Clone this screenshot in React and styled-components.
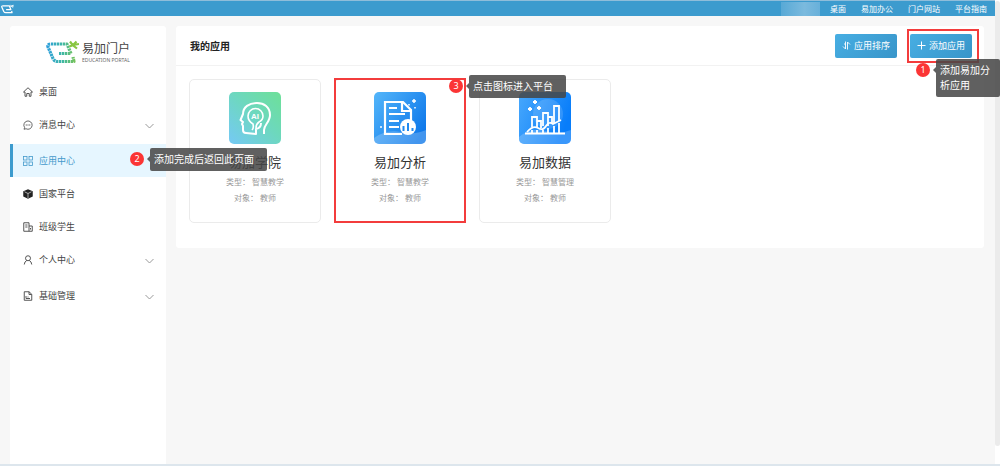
import React from "react"
import styled, { createGlobalStyle, css } from "styled-components"

const GlobalStyle = createGlobalStyle`
  * {
    box-sizing: border-box;
  }

  body {
    margin: 0;
    background: #f7f7f7;
    color: #444;
    font-family: "Noto Sans", "Noto Sans CJK SC", sans-serif;
    font-size: 9px;
  }

  button {
    font-family: inherit;
  }

  a {
    color: inherit;
    text-decoration: none;
  }
`

const Page = styled.div`
  display: flex;
  flex-direction: column;
  min-height: 100vh;
  border-bottom: 2px solid #dde6ed;
`

const Viewport = styled.div`
  display: flex;
  flex: 1;
`

const Screen = styled.div`
  display: flex;
  flex: 1;
  flex-direction: column;
  min-width: 0;
`

const ScrollTrack = styled.div`
  width: 5px;
  padding: 1px 0 18px;
  display: flex;
  background: white;
`

const ScrollThumb = styled.div`
  flex: 1;
  border-radius: 3px;
  background: #ebebeb;
`

const TopBar = styled.header`
  display: flex;
  align-items: center;
  height: 16px;
  padding: 0 8px 0 1px;
  border-top: 1px solid #8fbdda;
  background: #3c9bce;
  color: white;
`

const TopNav = styled.nav`
  display: flex;
  align-items: center;
  gap: 15px;
  margin-left: auto;
  font-size: 8px;
  line-height: 14px;
`

const UserName = styled.span`
  width: 39px;
  height: 14px;
  margin-right: -5px;
  background: linear-gradient(90deg, #58a9d6, #7bbade 60%, #68b0da);
`

const Body = styled.div`
  display: flex;
  flex: 1;
  align-items: flex-start;
  gap: 10px;
  padding: 10px 11px 0 10px;
`

const Sidebar = styled.aside`
  flex: none;
  align-self: stretch;
  width: 156px;
  padding-top: 12px;
  border-radius: 3px 3px 0 0;
  background: white;
`

const Brand = styled.a`
  display: flex;
  align-items: center;
  gap: 3px;
  height: 28px;
  margin: 0 0 9px 36px;
`

const BrandName = styled.strong`
  display: block;
  color: #444;
  font-size: 12px;
  font-weight: 400;
  line-height: 16px;
`

const BrandSub = styled.small`
  display: block;
  color: #666;
  font-size: 5px;
  line-height: 6px;
  white-space: nowrap;
`

const MenuItem = styled.button`
  display: flex;
  align-items: center;
  gap: 6px;
  width: 100%;
  height: 33px;
  padding: 0 12px 0 10px;
  border: 0;
  border-left: 3px solid transparent;
  background: none;
  color: inherit;
  font-size: 9px;
  line-height: 14px;

  ${({ $nested }) =>
    $nested &&
    css`
      height: 36px;
      padding-bottom: 3px;
    `}

  ${({ $active }) =>
    $active &&
    css`
      border-left-color: #3c9bce;
      background: #e6f6ff;
      color: #4499cb;
    `}
`

const ItemIcon = styled.svg`
  flex: none;
  width: 10px;
  height: 10px;
  fill: none;
  stroke: currentColor;
`

const Arrow = styled.svg`
  width: 9px;
  height: 6px;
  margin: 2px 0 0 auto;
  fill: none;
  stroke: #999;
`

const Panel = styled.main`
  flex: 1;
  min-width: 0;
  border-radius: 3px;
  background: white;
`

const PanelHeader = styled.div`
  display: flex;
  align-items: center;
  height: 40px;
  padding: 0 12px 0 14px;
  border-bottom: 1px solid #f2f2f2;
`

const PanelTitle = styled.h1`
  flex: 1;
  margin: 0;
  color: #222;
  font-size: 10px;
  font-weight: 700;
  line-height: 16px;
`

const Actions = styled.div`
  display: flex;
  gap: 13px;
`

const ActionButton = styled.button`
  display: flex;
  align-items: center;
  justify-content: center;
  gap: 3px;
  width: 62px;
  height: 24px;
  padding: 0;
  border: 0;
  border-radius: 2px;
  background: linear-gradient(135deg, #47aee3, #3895c9);
  color: white;
  font-size: 9px;
  line-height: 14px;

  svg {
    width: 9px;
    height: 9px;
    fill: none;
    stroke: currentColor;
  }
`

const Anchor = styled.div`
  position: relative;
`

const Outline = styled.span`
  position: absolute;
  inset: ${({ $inset }) => $inset};
  border: 2px solid #f33c3c;
  pointer-events: none;
`

const Callout = styled.div`
  position: absolute;
  top: ${({ $top }) => $top};
  left: ${({ $left }) => $left};
  z-index: 2;
  display: flex;
  align-items: flex-start;
  gap: 6px;
  pointer-events: none;
`

const Badge = styled.span`
  flex: none;
  width: 14px;
  height: 14px;
  margin-top: 4px;
  border-radius: 50%;
  background: #fb3535;
  color: white;
  font-size: 9px;
  line-height: 14px;
  text-align: center;
`

const Bubble = styled.span`
  position: relative;
  width: ${({ $width }) => $width};
  padding: 4px;
  border-radius: 2px;
  background: rgba(70, 70, 70, 0.86);
  color: white;
  font-size: 10px;
  line-height: 15px;
  text-align: left;

  &:before {
    content: "";
    position: absolute;
    top: 8px;
    left: -3px;
    border: solid transparent;
    border-width: 3px 3px 3px 0;
    border-right-color: rgba(70, 70, 70, 0.86);
  }
`

const AppGrid = styled.div`
  display: flex;
  flex-wrap: wrap;
  gap: 13px;
  padding: 13px 13px 25px;
`

const Card = styled.a`
  position: relative;
  display: flex;
  flex-direction: column;
  align-items: center;
  width: 132px;
  height: 144px;
  padding-top: 12px;
  border: 1px solid #ebebeb;
  border-radius: 5px;
`

const AppIcon = styled.svg`
  width: 52px;
  height: 52px;
  border-radius: 5px;
`

const AppName = styled.h2`
  margin: 8px 0 3px;
  color: #333;
  font-size: 13px;
  font-weight: 400;
  line-height: 20px;
`

const Meta = styled.p`
  margin: 0 0 2px;
  color: #999;
  font-size: 8px;
  line-height: 14px;
`

const LogoMark = ({ plain, width, height }) => (
  <svg width={width} height={height} viewBox="0 0 33 24" fill="none">
    <defs>
      <linearGradient id="brand" x1="0" y1="0" x2="33" y2="0" gradientUnits="userSpaceOnUse">
        <stop offset="0" stopColor="#2d9ee0" />
        <stop offset="0.5" stopColor="#3fb8a4" />
        <stop offset="1" stopColor="#87c540" />
      </linearGradient>
    </defs>
    <path
      d="M13 13.5H25L21 4H5Q1 4 2 7L7 18.5Q8.500 21.500 12 21.500H28L27 17"
      stroke={plain ? "white" : "url(#brand)"}
      strokeWidth="3.2"
      strokeLinejoin="round"
      strokeDasharray={plain ? "none" : "2.4 0.6"}
    />
    <path
      d="M24 1.500 26.500 5 31 8.500M30.500 1.500 27 5 23.500 6.500M27 5 33 4"
      stroke={plain ? "white" : "#88c641"}
      strokeWidth="2.2"
    />
  </svg>
)

const HomeIcon = () => (
  <ItemIcon viewBox="0 0 20 20" strokeWidth="1.8">
    <path d="M1 10 10 1.500 19 10H16V18.500H12.500V13H7.500V18.500H4V10Z" strokeLinejoin="round" />
  </ItemIcon>
)

const MessageIcon = () => (
  <ItemIcon viewBox="0 0 20 20" strokeWidth="1.6">
    <path d="M2 18.500 3.200 15A8.300 8.300 0 1 1 6 17.500Z" />
    <path d="M5.500 10H7.500M9 10H11M12.500 10H14.500" strokeWidth="2" />
  </ItemIcon>
)

const GridIcon = () => (
  <ItemIcon viewBox="0 0 20 20" strokeWidth="1.6">
    <rect x="1" y="1" width="7" height="7" />
    <rect x="12" y="1" width="7" height="7" />
    <rect x="1" y="12" width="7" height="7" />
    <rect x="12" y="12" width="7" height="7" />
  </ItemIcon>
)

const CubeIcon = () => (
  <ItemIcon viewBox="0 0 20 20" strokeWidth="1.2">
    <path d="M10 0.500 19.500 4.500V15L10 19.500 0.500 15V4.500Z" fill="#222" stroke="none" />
    <path d="M3 5.500 10 9 17 5.500M10 9V18" stroke="white" />
  </ItemIcon>
)

const ClassIcon = () => (
  <ItemIcon viewBox="0 0 20 20" strokeWidth="1.8">
    <path d="M12 18.500H1.500V1.500H12V18.500H18.500V8H12M4.500 6H9M4.500 10H9M15 12V15" />
  </ItemIcon>
)

const PersonIcon = () => (
  <ItemIcon viewBox="0 0 20 20" strokeWidth="1.8">
    <circle cx="10" cy="6.500" r="5" />
    <path d="M2.500 19Q3 13 7.500 11M17.500 19Q17 13 12.500 11" />
  </ItemIcon>
)

const FileIcon = () => (
  <ItemIcon viewBox="0 0 20 20" strokeWidth="1.8">
    <path d="M2.500 1.500H12L17.500 6.500V18.500H2.500ZM12 1.500V7H17M6 10V15H14M9 12H11" />
  </ItemIcon>
)

const AcademyIcon = () => (
  <AppIcon viewBox="0 0 52 52" fill="none" stroke="white" strokeWidth="2">
    <defs>
      <linearGradient id="academy" x1="0" y1="1" x2="1" y2="0">
        <stop offset="0" stopColor="#75c9f5" />
        <stop offset="0.55" stopColor="#6dd8bd" />
        <stop offset="1" stopColor="#6de098" />
      </linearGradient>
    </defs>
    <rect width="52" height="52" fill="url(#academy)" stroke="none" />
    <path
      d="M35 42V38C35 33 41 30 41 23 41 15 35 11 28 11 20 11 14 15 14 22L11.500 28 14 30 13 32 14 34V38Q14 41 17 41L27 42V37Q32 36 32 31"
      strokeLinejoin="round"
    />
    <path d="M23 38Q25 36 24 32 19 29 19 24A7.500 7.500 0 0 1 34 24Q34 28 30 30 27 32 27 36" strokeWidth="1.6" />
    <text
      x="26"
      y="27"
      fill="white"
      stroke="none"
      fontFamily="Liberation Sans"
      fontSize="8"
      fontWeight="700"
      textAnchor="middle"
    >
      AI
    </text>
  </AppIcon>
)

const AnalysisIcon = () => (
  <AppIcon viewBox="0 0 52 52" fill="none" stroke="white" strokeWidth="2">
    <defs>
      <linearGradient id="analysis" x1="0" y1="0" x2="1" y2="0.7">
        <stop offset="0" stopColor="#54b6fa" />
        <stop offset="1" stopColor="#0e78ea" />
      </linearGradient>
    </defs>
    <rect width="52" height="52" fill="url(#analysis)" stroke="none" />
    <path d="M0 46Q12 37 27 40T52 38V52H0Z" fill="white" fillOpacity="0.22" stroke="none" />
    <path d="M28 42H11V10H29L37 18V28M28 10V19H37" strokeWidth="2.2" />
    <path d="M15 16H23M15 22H31M15 29H25M15 35H25" strokeWidth="2.2" />
    <circle cx="34" cy="35" r="8" fill="white" stroke="none" />
    <path d="M29.500 34V39M34 31V39M38.500 36V39" stroke="#2089ef" strokeWidth="2" />
    <path d="M40 7V11M38 9H42M35 12V13.500M41 15V16.500M7 34V36" strokeWidth="1.500" />
  </AppIcon>
)

const DataIcon = () => (
  <AppIcon viewBox="0 0 52 52" fill="none" stroke="white" strokeWidth="1.8">
    <defs>
      <linearGradient id="data" x1="0" y1="0" x2="1" y2="0.4">
        <stop offset="0" stopColor="#48a8fc" />
        <stop offset="1" stopColor="#087dfa" />
      </linearGradient>
    </defs>
    <rect width="52" height="52" fill="url(#data)" stroke="none" />
    <circle cx="29" cy="22" r="15" fill="white" fillOpacity="0.14" stroke="none" />
    <path d="M0 45Q12 35 26 39T52 38V52H0Z" fill="white" fillOpacity="0.2" stroke="none" />
    <path d="M13 35V25H18V35M18 29H22V36M24 34V21H29V34M29 25H33V32M35 31V14H40V29M13 38V41M18 38V41M24 38V41M29 36V41M35 34V41M40 31V41" />
    <path d="M6 41.500H46" />
    <path d="M8 40Q14 33 19 36T27 34 34 32L42 28" />
    <path d="M16 8V12M14 10H18M11 15V19M9 17H13M20 14V18M18 16H22" />
  </AppIcon>
)

const SortIcon = () => (
  <svg viewBox="0 0 18 18" strokeWidth="1.8">
    <path d="M7 1V16L2 11M11 17V2L16 7M7 6H4" />
  </svg>
)

const PlusIcon = () => (
  <svg viewBox="0 0 18 18" strokeWidth="2">
    <path d="M9 1V17M1 9H17" />
  </svg>
)

const menu = [
  { label: "桌面", icon: HomeIcon },
  { label: "消息中心", icon: MessageIcon, nested: true },
  { label: "应用中心", icon: GridIcon, active: true },
  { label: "国家平台", icon: CubeIcon },
  { label: "班级学生", icon: ClassIcon },
  { label: "个人中心", icon: PersonIcon, nested: true },
  { label: "基础管理", icon: FileIcon, nested: true },
]

const apps = [
  { name: "易加学院", type: "智慧教学", icon: AcademyIcon },
  { name: "易加分析", type: "智慧教学", icon: AnalysisIcon, marked: true },
  { name: "易加数据", type: "智慧管理", icon: DataIcon },
]

const Tip = ({ number, top, left, width, children }) => (
  <Callout $top={top} $left={left}>
    <Badge>{number}</Badge>
    <Bubble $width={width}>{children}</Bubble>
  </Callout>
)

const SideMenu = () => (
  <Sidebar>
    <Brand href="#">
      <LogoMark width={33} height={24} />
      <span>
        <BrandName>易加门户</BrandName>
        <BrandSub>EDUCATION PORTAL</BrandSub>
      </span>
    </Brand>
    <nav>
      {menu.map(({ label, icon: Icon, nested, active }) => (
        <Anchor key={label}>
          <MenuItem $active={active} $nested={nested}>
            <Icon />
            {label}
            {nested && (
              <Arrow viewBox="0 0 9 6">
                <path d="M0.500 1 4.500 5 8.500 1" />
              </Arrow>
            )}
          </MenuItem>
          {active && (
            <Tip number="2" top="4px" left="120px" width="117px">
              添加完成后返回此页面
            </Tip>
          )}
        </Anchor>
      ))}
    </nav>
  </Sidebar>
)

const App = () => (
  <Page>
    <GlobalStyle />
    <Viewport>
      <Screen>
        <TopBar>
          <LogoMark plain width={13} height={10} />
          <TopNav>
            <UserName />
            <a href="#">桌面</a>
            <a href="#">易加办公</a>
            <a href="#">门户网站</a>
            <a href="#">平台指南</a>
          </TopNav>
        </TopBar>
        <Body>
          <SideMenu />
          <Panel>
            <PanelHeader>
              <PanelTitle>我的应用</PanelTitle>
              <Actions>
                <ActionButton>
                  <SortIcon />
                  应用排序
                </ActionButton>
                <Anchor>
                  <ActionButton>
                    <PlusIcon />
                    添加应用
                  </ActionButton>
                  <Outline $inset="-5px -7px -5px -3px" />
                  <Tip number="1" top="25px" left="6px" width="64px">
                    添加易加分析应用
                  </Tip>
                </Anchor>
              </Actions>
            </PanelHeader>
            <AppGrid>
              {apps.map(({ name, type, icon: Icon, marked }) => (
                <Card key={name} href="#">
                  <Icon />
                  <AppName>{name}</AppName>
                  <Meta>类型： {type}</Meta>
                  <Meta>对象： 教师</Meta>
                  {marked && (
                    <>
                      <Outline $inset="-2px -1px -1px -1px" />
                      <Tip number="3" top="-5px" left="114px" width="97px">
                        点击图标进入平台
                      </Tip>
                    </>
                  )}
                </Card>
              ))}
            </AppGrid>
          </Panel>
        </Body>
      </Screen>
      <ScrollTrack>
        <ScrollThumb />
      </ScrollTrack>
    </Viewport>
  </Page>
)

export default App
